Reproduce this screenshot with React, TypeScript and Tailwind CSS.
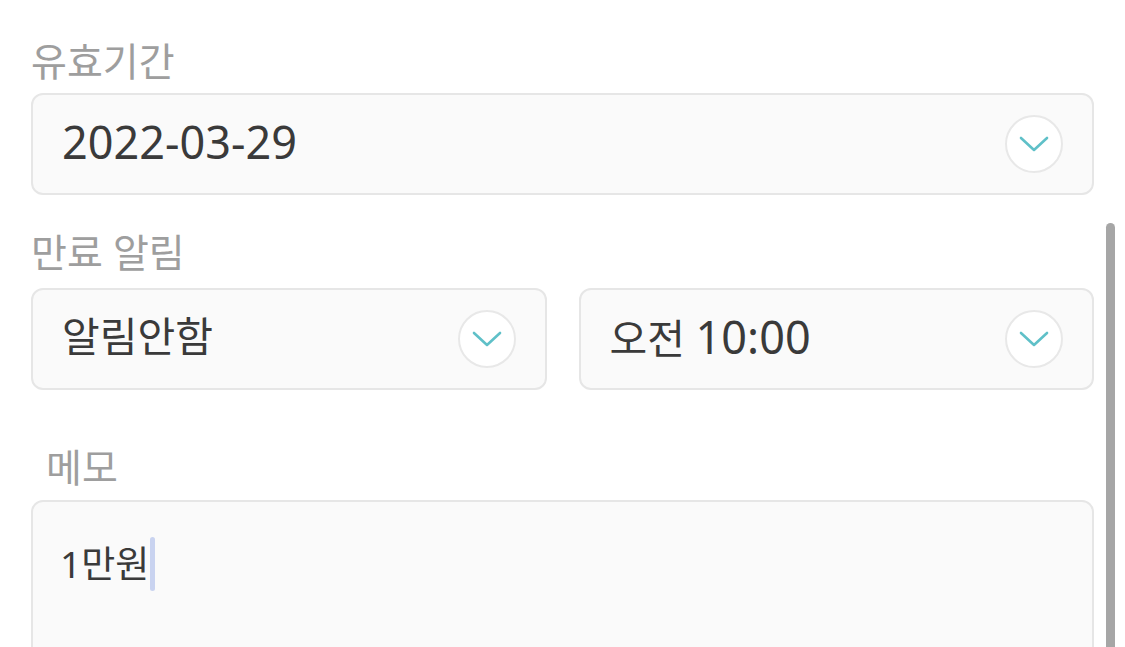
const FONT = { fontFamily: '"Noto Sans", "Noto Sans CJK KR", sans-serif' };

function Chevron() {
  return (
    <div className="flex h-[58px] w-[58px] shrink-0 items-center justify-center rounded-full border-2 border-[#e8e8e8] bg-white">
      <svg width="30" height="16" viewBox="0 0 30 16" fill="none">
        <polyline
          points="2,2 15,14 28,2"
          stroke="#5fc0c8"
          strokeWidth="2.6"
          strokeLinecap="round"
          strokeLinejoin="round"
        />
      </svg>
    </div>
  );
}

function SelectBox({ children, className = '' }: { children: React.ReactNode; className?: string }) {
  return (
    <div
      className={`flex h-[102px] items-center justify-between rounded-[12px] border-2 border-[#e6e6e6] bg-[#fafafa] pl-[29px] pr-[29px] ${className}`}
    >
      <span className="mb-[5px] leading-none text-[#3a3a3a]">{children}</span>
      <Chevron />
    </div>
  );
}

export default function App() {
  return (
    <div className="relative h-[647px] w-[1125px] overflow-hidden bg-white" style={FONT}>
      {/* scroll indicator */}
      <div className="absolute left-[1106px] top-[223px] h-[440px] w-[9px] rounded-t-full bg-[#a6a6a6]" />

      <div className="w-[1094px] pl-[31px] pt-[37px]">
        <div className="h-[48px] text-[39px] leading-[48px] text-[#9e9e9e]">유효기간</div>
        <SelectBox className="mt-[8px]">
          <span className="text-[45px]">2022-03-29</span>
        </SelectBox>

        <div className="mt-[33px] h-[48px] text-[39px] leading-[48px] text-[#9e9e9e]">만료 알림</div>
        <div className="mt-[12px] flex gap-[32px]">
          <SelectBox className="flex-1">
            <span className="text-[41px]">알림안함</span>
          </SelectBox>
          <SelectBox className="flex-1">
            <span className="text-[41px]">오전 </span>
            <span className="text-[45px]">10:00</span>
          </SelectBox>
        </div>

        <div className="mt-[53px] h-[48px] pl-[15px] text-[39px] leading-[48px] text-[#9e9e9e]">메모</div>
        <div className="mt-[9px] h-[200px] rounded-[12px] border-2 border-[#e6e6e6] bg-[#fafafa] pl-[27px] pt-[35px]">
          <div className="flex items-center">
            <span className="text-[37px] leading-[52px] text-[#3a3a3a]">1만원</span>
            <span className="ml-[1px] h-[54px] w-[5px] rounded-full bg-[#c9d3f0]" />
          </div>
        </div>
      </div>
    </div>
  );
}
